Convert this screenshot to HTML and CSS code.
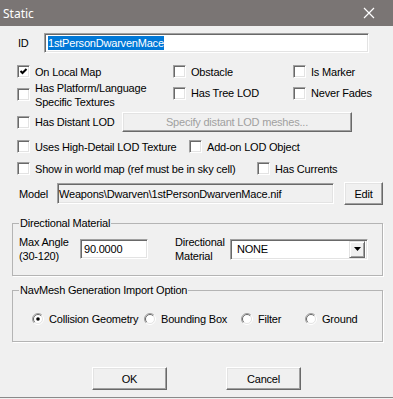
FILE: index.html
```html
<!DOCTYPE html>
<html lang="en">

<head>
    <meta charset="UTF-8">
    <title>Static</title>
    <link rel="stylesheet" href="styles.css">
</head>

<body>
    <div class="dialog">
        <div class="titlebar">
            <span class="title">Static</span>
            <svg class="close" width="12" height="12" viewBox="0 0 12 12">
                <path d="M1 1 L11 11 M11 1 L1 11" stroke="#fff" stroke-width="1.2" fill="none" />
            </svg>
        </div>

        <div class="content">
            <div class="row id-row">
                <span class="id-label">ID</span>
                <div class="field id-field"><span class="selected">1stPersonDwarvenMace</span></div>
            </div>

            <div class="row row-1">
                <div class="check col-a">
                    <span class="box"><svg width="9" height="9" viewBox="0 0 9 9"><path d="M1.5 4 L3.5 6 L7.5 2" stroke="#000" stroke-width="2" fill="none" /></svg></span>
                    <span>On Local Map</span>
                </div>
                <div class="check col-b"><span class="box"></span><span>Obstacle</span></div>
                <div class="check"><span class="box"></span><span>Is Marker</span></div>
            </div>

            <div class="row row-2">
                <div class="check col-a"><span class="box"></span><span class="two-line">Has Platform/Language<br>Specific Textures</span></div>
                <div class="check col-b raised"><span class="box"></span><span>Has Tree LOD</span></div>
                <div class="check raised"><span class="box"></span><span>Never Fades</span></div>
            </div>

            <div class="row row-3">
                <div class="check col-distant"><span class="box"></span><span>Has Distant LOD</span></div>
                <button class="btn btn-lod" disabled>Specify distant LOD meshes...</button>
            </div>

            <div class="row row-4">
                <div class="check col-hd"><span class="box"></span><span>Uses High-Detail LOD Texture</span></div>
                <div class="check"><span class="box"></span><span>Add-on LOD Object</span></div>
            </div>

            <div class="row row-5">
                <div class="check col-map"><span class="box"></span><span>Show in world map (ref must be in sky cell)</span></div>
                <div class="check"><span class="box"></span><span>Has Currents</span></div>
            </div>

            <div class="row model-row">
                <span class="model-label">Model</span>
                <div class="field model-field">Weapons\Dwarven\1stPersonDwarvenMace.nif</div>
                <button class="btn btn-edit">Edit</button>
            </div>

            <fieldset class="group group-material">
                <legend>Directional Material</legend>
                <div class="material-row">
                    <span class="two-line angle-label">Max Angle<br>(30-120)</span>
                    <div class="field angle-field">90.0000</div>
                    <span class="two-line dir-label">Directional<br>Material</span>
                    <div class="field select">
                        <span class="select-value">NONE</span>
                        <span class="drop-btn"><svg width="7" height="4" viewBox="0 0 7 4"><path d="M0 0 H7 L3.5 4 Z" fill="#000" /></svg></span>
                    </div>
                </div>
            </fieldset>

            <fieldset class="group group-navmesh">
                <legend>NavMesh Generation Import Option</legend>
                <div class="radio-row">
                    <div class="radio col-collision">
                        <svg width="12" height="12" viewBox="0 0 12 12">
                            <circle cx="6" cy="6" r="5" fill="#fff" />
                            <path d="M2.1 9.9 A5.5 5.5 0 0 1 9.9 2.1" stroke="#a0a0a0" fill="none" />
                            <path d="M9.9 2.1 A5.5 5.5 0 0 1 2.1 9.9" stroke="#fff" fill="none" />
                            <path d="M2.8 9.2 A4.5 4.5 0 0 1 9.2 2.8" stroke="#696969" fill="none" />
                            <path d="M9.2 2.8 A4.5 4.5 0 0 1 2.8 9.2" stroke="#e3e3e3" fill="none" />
                            <circle cx="6" cy="6" r="1.8" fill="#000" />
                        </svg>
                        <span>Collision Geometry</span>
                    </div>
                    <div class="radio col-bounding">
                        <svg width="12" height="12" viewBox="0 0 12 12">
                            <circle cx="6" cy="6" r="5" fill="#fff" />
                            <path d="M2.1 9.9 A5.5 5.5 0 0 1 9.9 2.1" stroke="#a0a0a0" fill="none" />
                            <path d="M9.9 2.1 A5.5 5.5 0 0 1 2.1 9.9" stroke="#fff" fill="none" />
                            <path d="M2.8 9.2 A4.5 4.5 0 0 1 9.2 2.8" stroke="#696969" fill="none" />
                            <path d="M9.2 2.8 A4.5 4.5 0 0 1 2.8 9.2" stroke="#e3e3e3" fill="none" />
                        </svg>
                        <span>Bounding Box</span>
                    </div>
                    <div class="radio col-filter">
                        <svg width="12" height="12" viewBox="0 0 12 12">
                            <circle cx="6" cy="6" r="5" fill="#fff" />
                            <path d="M2.1 9.9 A5.5 5.5 0 0 1 9.9 2.1" stroke="#a0a0a0" fill="none" />
                            <path d="M9.9 2.1 A5.5 5.5 0 0 1 2.1 9.9" stroke="#fff" fill="none" />
                            <path d="M2.8 9.2 A4.5 4.5 0 0 1 9.2 2.8" stroke="#696969" fill="none" />
                            <path d="M9.2 2.8 A4.5 4.5 0 0 1 2.8 9.2" stroke="#e3e3e3" fill="none" />
                        </svg>
                        <span>Filter</span>
                    </div>
                    <div class="radio">
                        <svg width="12" height="12" viewBox="0 0 12 12">
                            <circle cx="6" cy="6" r="5" fill="#fff" />
                            <path d="M2.1 9.9 A5.5 5.5 0 0 1 9.9 2.1" stroke="#a0a0a0" fill="none" />
                            <path d="M9.9 2.1 A5.5 5.5 0 0 1 2.1 9.9" stroke="#fff" fill="none" />
                            <path d="M2.8 9.2 A4.5 4.5 0 0 1 9.2 2.8" stroke="#696969" fill="none" />
                            <path d="M9.2 2.8 A4.5 4.5 0 0 1 2.8 9.2" stroke="#e3e3e3" fill="none" />
                        </svg>
                        <span>Ground</span>
                    </div>
                </div>
            </fieldset>

            <div class="row button-row">
                <button class="btn btn-dialog">OK</button>
                <button class="btn btn-dialog">Cancel</button>
            </div>
        </div>
    </div>
</body>

</html>
```

FILE: styles.css
```css
body {
    margin: 0;
    padding: 0;
    background-color: #f0f0f0;
    font-family: "Liberation Sans", Arial, sans-serif;
    font-size: 11px;
    letter-spacing: -0.2px;
    color: #000;
}

.dialog {
    width: 393px;
    height: 397px;
    border-bottom: 1px solid #8a8a8a;
    background-color: #f0f0f0;
    overflow: hidden;
}

.titlebar {
    height: 26px;
    background-color: #7a7574;
    display: flex;
    align-items: center;
    justify-content: space-between;
    padding: 0 18px 0 3px;
}

.title {
    color: #fff;
    font-family: "Noto Sans", sans-serif;
    font-size: 12px;
    letter-spacing: 0;
}

.row {
    display: flex;
    align-items: center;
    padding-left: 17px;
}

/* sunken edit box */
.field {
    box-sizing: border-box;
    background-color: #fff;
    border-top: 1px solid #a0a0a0;
    border-left: 1px solid #a0a0a0;
    border-right: 1px solid #fff;
    border-bottom: 1px solid #fff;
    box-shadow: inset 1px 1px 0 #696969, inset -1px -1px 0 #e3e3e3;
    padding: 0 3px;
    display: flex;
    align-items: center;
    white-space: nowrap;
}

.id-row {
    margin-top: 7px;
    height: 20px;
}

.id-label {
    width: 26px;
    padding-left: 1px;
}

.id-field {
    width: 325px;
    height: 20px;
}

.selected {
    background-color: #0078d7;
    color: #fff;
    line-height: 14px;
}

.check {
    display: flex;
    align-items: center;
    gap: 5px;
    white-space: nowrap;
}

.box {
    box-sizing: border-box;
    width: 13px;
    height: 13px;
    flex: none;
    background-color: #fff;
    border-top: 1px solid #a0a0a0;
    border-left: 1px solid #a0a0a0;
    border-right: 1px solid #fff;
    border-bottom: 1px solid #fff;
    box-shadow: inset 1px 1px 0 #696969, inset -1px -1px 0 #e3e3e3;
    display: flex;
    align-items: center;
    justify-content: center;
}

.two-line {
    line-height: 14px;
}

.col-a {
    width: 156px;
}

.col-b {
    width: 120px;
}

.row-1 {
    margin-top: 11px;
    height: 15px;
}

.row-2 {
    margin-top: 1px;
    height: 29px;
}

.row-2 .raised {
    margin-top: -3px;
}

.row-3 {
    margin-top: 3px;
    height: 20px;
}

.col-distant {
    width: 105px;
}

.row-4 {
    margin-top: 7px;
    height: 15px;
}

.col-hd {
    width: 172px;
}

.row-5 {
    margin-top: 7px;
    height: 15px;
}

.col-map {
    width: 240px;
}

/* raised button */
.btn {
    box-sizing: border-box;
    font-family: inherit;
    font-size: 11px;
    letter-spacing: inherit;
    color: #000;
    background-color: #f0f0f0;
    border-top: 1px solid #fff;
    border-left: 1px solid #fff;
    border-right: 1px solid #696969;
    border-bottom: 1px solid #696969;
    box-shadow: inset -1px -1px 0 #a0a0a0, inset 1px 1px 0 #e3e3e3;
    padding: 0;
    margin: 0;
}

.btn-lod {
    width: 230px;
    height: 20px;
    color: #a0a0a0;
}

.model-row {
    margin-top: 6px;
    height: 23px;
}

.model-label {
    width: 38px;
    padding-left: 2px;
}

.model-field {
    width: 277px;
    height: 21px;
    background-color: #f0f0f0;
    padding-left: 1px;
}

.btn-edit {
    width: 39px;
    height: 23px;
    margin-left: 10px;
}

.group {
    margin: 0 10px 0 12px;
    border: 1px solid #b4b4b4;
    box-shadow: 1px 1px 0 #fff;
    min-width: 0;
}

.group legend {
    padding: 0 1px;
    line-height: 14px;
}

.group-material {
    margin-top: 11px;
    padding: 9px 0 16px 6px;
}

.group-material legend {
    margin-left: 0;
}

.material-row {
    display: flex;
    align-items: center;
    height: 20px;
}

.angle-label {
    width: 61px;
}

.angle-field {
    width: 68px;
    height: 20px;
}

.dir-label {
    width: 55px;
    margin-left: 27px;
}

.select {
    width: 138px;
    height: 21px;
    padding: 0 2px 0 6px;
    justify-content: space-between;
}

.drop-btn {
    box-sizing: border-box;
    width: 16px;
    height: 17px;
    background-color: #f0f0f0;
    border-top: 1px solid #e3e3e3;
    border-left: 1px solid #e3e3e3;
    border-right: 1px solid #696969;
    border-bottom: 1px solid #696969;
    box-shadow: inset 1px 1px 0 #fff, inset -1px -1px 0 #a0a0a0;
    display: flex;
    align-items: center;
    justify-content: center;
}

.group-navmesh {
    margin-top: 7px;
    padding: 15px 0 15px 19px;
}

.group-navmesh legend {
    margin-left: -13px;
}

.radio-row {
    display: flex;
    align-items: center;
    height: 14px;
}

.radio {
    display: flex;
    align-items: center;
    gap: 5px;
    white-space: nowrap;
}

.radio svg {
    flex: none;
}

.col-collision {
    width: 112px;
}

.col-bounding {
    width: 97px;
}

.col-filter {
    width: 64px;
}

.button-row {
    margin-top: 25px;
    padding-left: 92px;
    gap: 59px;
}

.btn-dialog {
    width: 75px;
    height: 23px;
}
```
